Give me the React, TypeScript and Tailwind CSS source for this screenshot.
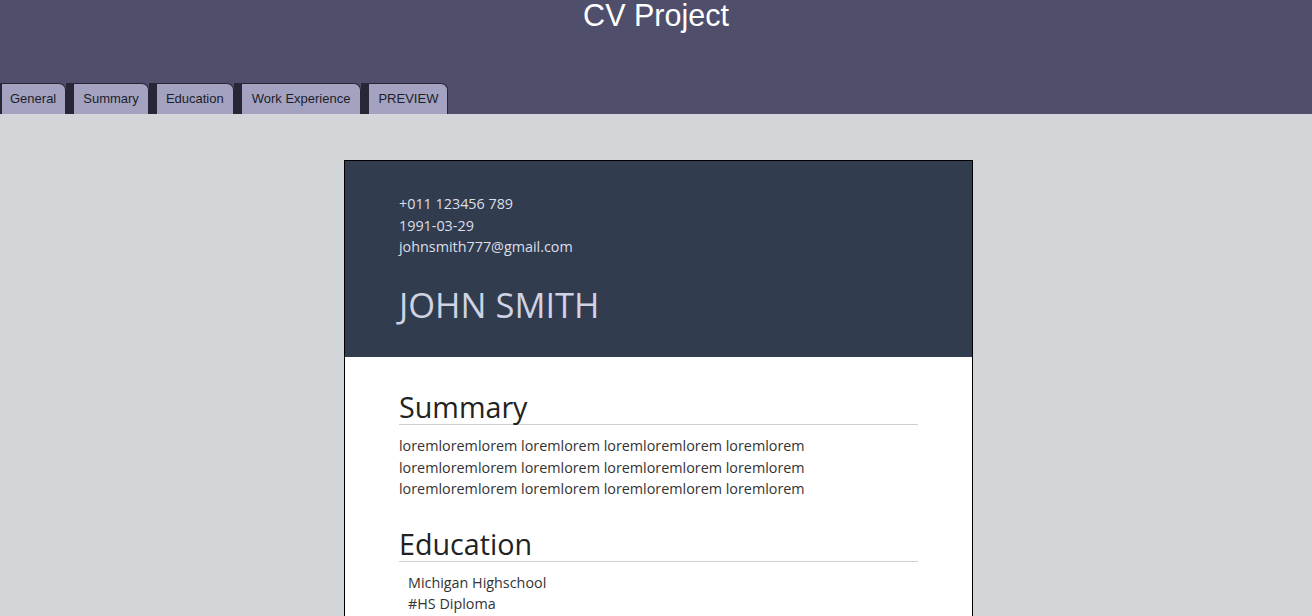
const tabs = ['General', 'Summary', 'Education', 'Work Experience', 'PREVIEW'];

function Section({ title, children }: { title: string; children: React.ReactNode }) {
  return (
    <section className="mt-[26px] first:mt-0">
      <h2 className="text-[28.7px] leading-[35px] text-[#222] border-b border-[#cfcfcf]">{title}</h2>
      <div className="mt-[10px] text-[14.35px] leading-[21.5px] text-[#333]">{children}</div>
    </section>
  );
}

export default function App() {
  return (
    <div className="min-h-screen bg-[#d3d6d9] font-['Liberation_Sans',Arial,sans-serif]">
      <header className="bg-[#4f4e6b] h-[114px] flex flex-col justify-between">
        <h1 className="text-center text-white text-[30.5px] leading-[30px]">CV Project</h1>
        <nav className="flex items-end">
          {tabs.map((t, i) => (
            <button
              key={t}
              className={`h-[31px] bg-[#a3a3c1] text-[#1d1d2a] text-[13px] border-t border-r border-[#262636] rounded-tr-[7px] ${
                i === 0 ? 'border-l-2 pl-[8px] pr-[9px]' : i === 3 ? 'border-l-[8px] px-[10px]' : 'border-l-[8px] px-[9px]'
              } border-l-[#262636]`}
            >
              {t}
            </button>
          ))}
        </nav>
      </header>

      <main className="flex justify-center pt-[46px] pb-10 font-['Open_Sans','DejaVu_Sans',sans-serif]">
        <div className="w-[629px] border border-black bg-white ml-[5px]">
          <div className="bg-[#323c4f] h-[196px] pl-[54px] pt-[32px]">
            <div className="text-[14.35px] leading-[21.5px] text-[#dcdfe8]">
              <p>+011 123456 789</p>
              <p>1991-03-29</p>
              <p>johnsmith777@gmail.com</p>
            </div>
            <p className="mt-[26px] text-[34.5px] leading-[42px] text-[#cfd3e3]">JOHN SMITH</p>
          </div>
          <div className="px-[54px] pt-[32px] pb-10">
            <Section title="Summary">
              <p>loremloremlorem loremlorem loremloremlorem loremlorem</p>
              <p>loremloremlorem loremlorem loremloremlorem loremlorem</p>
              <p>loremloremlorem loremlorem loremloremlorem loremlorem</p>
            </Section>
            <Section title="Education">
              <div className="pl-[9px]">
                <p>Michigan Highschool</p>
                <p>#HS Diploma</p>
                <p>2005 - 2009</p>
              </div>
            </Section>
          </div>
        </div>
      </main>
    </div>
  );
}
